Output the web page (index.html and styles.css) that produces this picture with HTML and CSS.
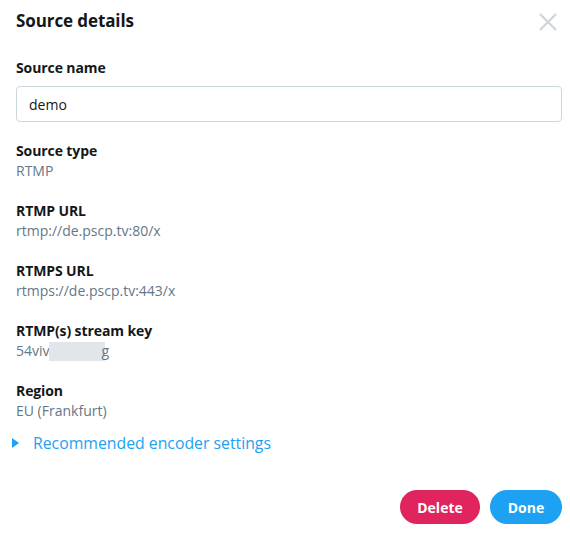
FILE: index.html
```html
<!DOCTYPE html>
<html lang="en">
<head>
  <meta charset="UTF-8" />
  <title>Source details</title>
  <link rel="stylesheet" href="styles.css">
</head>
<body>
  <main class="dialog">
    <header class="dialog-head">
      <h1>Source details</h1>
      <button class="close" aria-label="Close">
        <svg width="18" height="18" viewBox="0 0 18 18"><path d="M1 1L17 17M17 1L1 17" stroke="#ccd6dd" stroke-width="2.2" fill="none"/></svg>
      </button>
    </header>

    <label class="field-label" for="sourceName">Source name</label>
    <input id="sourceName" class="text-input" type="text" value="demo" />

    <div class="info">
      <div class="info-label">Source type</div>
      <div class="info-value">RTMP</div>
    </div>
    <div class="info">
      <div class="info-label">RTMP URL</div>
      <div class="info-value">rtmp://de.pscp.tv:80/x</div>
    </div>
    <div class="info">
      <div class="info-label">RTMPS URL</div>
      <div class="info-value">rtmps://de.pscp.tv:443/x</div>
    </div>
    <div class="info">
      <div class="info-label">RTMP(s) stream key</div>
      <div class="info-value">54viv<span class="redact"></span>g</div>
    </div>
    <div class="info">
      <div class="info-label">Region</div>
      <div class="info-value">EU (Frankfurt)</div>
    </div>

    <div class="disclosure">
      <span class="caret"></span>
      <a href="#">Recommended encoder settings</a>
    </div>

    <footer class="actions">
      <button class="btn btn-delete">Delete</button>
      <button class="btn btn-done">Done</button>
    </footer>
  </main>
</body>
</html>
```

FILE: styles.css
```css
* {
  margin: 0; padding: 0; box-sizing: border-box;
}
body {
  font-family: 'Open Sans', 'Noto Sans', sans-serif;
  color: #14171a;
  background: #fff;
}
.dialog {
  width: 570px;
  height: 544px;
  padding: 0 8px 0 16px;
  display: flex;
  flex-direction: column;
}
.dialog-head {
  display: flex;
  justify-content: space-between;
  align-items: center;
  height: 40px;
}
h1 {
  font-size: 17px;
  font-weight: 700;
  letter-spacing: -0.1px;
}
.close {
  border: none;
  background: none;
  width: 18px;
  height: 18px;
  margin: 3px 5px 0 0;
  cursor: pointer;
}
.field-label {
  display: block;
  margin-top: 18px;
  font-size: 14px;
  font-weight: 700;
  letter-spacing: -0.1px;
  line-height: 20px;
}
.text-input {
  margin-top: 8px;
  width: 546px;
  height: 36px;
  border: 1px solid #ccd6dd;
  border-radius: 4px;
  padding: 0 12px;
  font-family: inherit;
  font-size: 14px;
  color: #14171a;
  outline: none;
}
.info {
  margin-top: 20px;
  line-height: 20px;
}
.text-input + .info {
  margin-top: 19px;
}
.info-label {
  font-size: 14px;
  font-weight: 700;
  letter-spacing: -0.1px;
}
.info-value {
  font-size: 14px;
  color: #657786;
}
.redact {
  display: inline-block;
  width: 56px;
  height: 19px;
  background: #e1e6ea;
  vertical-align: -5px;
  margin-left: -1px;
  margin-right: -3px;
}
.disclosure {
  display: flex;
  align-items: center;
  margin-top: 11px;
  margin-left: -4px;
  gap: 14px;
}
.caret {
  width: 0; height: 0;
  border-top: 5px solid transparent;
  border-bottom: 5px solid transparent;
  border-left: 7px solid #1da1f2;
}
.disclosure a {
  color: #1da1f2;
  text-decoration: none;
  font-size: 15.8px;
}
.actions {
  margin-top: auto;
  margin-bottom: 20px;
  display: flex;
  justify-content: flex-end;
  gap: 10px;
}
.btn {
  height: 34px;
  border: none;
  border-radius: 17px;
  color: #fff;
  font-family: inherit;
  font-size: 14px;
  font-weight: 700;
  padding: 0 14px;
  cursor: pointer;
}
.btn-delete {
  background: #e0245e;
  width: 80px;
}
.btn-done {
  background: #1da1f2;
  width: 72px;
}
```
